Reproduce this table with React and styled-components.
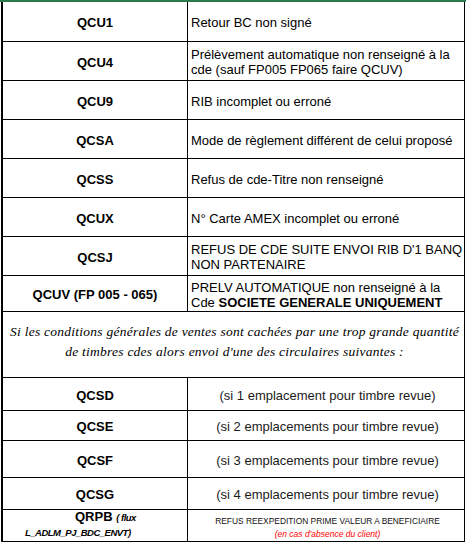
import styled, { createGlobalStyle } from "styled-components";

const GlobalStyle = createGlobalStyle`
  body {
    margin: 0;
    background: #ffffff;
    font-family: "Liberation Sans", Arial, sans-serif;
    color: #000000;
  }
`;

const rows = [
  { code: "QCU1", h: 40, lines: ["Retour BC non signé"] },
  {
    code: "QCU4",
    h: 39,
    lines: [
      "Prélèvement automatique non renseigné à la",
      "cde (sauf FP005 FP065 faire QCUV)",
    ],
  },
  { code: "QCU9", h: 39, lines: ["RIB incomplet ou erroné"] },
  { code: "QCSA", h: 39, lines: ["Mode de règlement différent de celui proposé"] },
  { code: "QCSS", h: 39, lines: ["Refus de cde-Titre non renseigné"] },
  { code: "QCUX", h: 39, lines: ["N° Carte AMEX incomplet ou erroné"] },
  {
    code: "QCSJ",
    h: 39,
    lines: ["REFUS DE CDE SUITE ENVOI RIB D'1 BANQ", "NON PARTENAIRE"],
  },
];

const circulaires = [
  { code: "QCSD", h: 33, text: "(si 1 emplacement pour timbre revue)" },
  { code: "QCSE", h: 30, text: "(si 2 emplacements pour timbre revue)" },
  { code: "QCSF", h: 37, text: "(si 3 emplacements pour timbre revue)" },
  { code: "QCSG", h: 32, text: "(si 4 emplacements pour timbre revue)" },
];

const App = () => {
  return (
    <>
      <GlobalStyle />
      <Sheet>
        <Table>
          {rows.map((r) => (
            <Row key={r.code} $h={r.h}>
              <Code>{r.code}</Code>
              <Desc>
                {r.lines.map((l) => (
                  <Line key={l}>{l}</Line>
                ))}
              </Desc>
            </Row>
          ))}

          <Row $h={36}>
            <Code>QCUV (FP 005 - 065)</Code>
            <Desc>
              <Line>PRELV AUTOMATIQUE non renseigné à la</Line>
              <Line>
                Cde <strong>SOCIETE GENERALE UNIQUEMENT</strong>
              </Line>
            </Desc>
          </Row>

          <NoteRow $h={66}>
            Si les conditions générales de ventes sont cachées par une trop grande quantité
            <br />
            de timbres cdes alors envoi d'une des circulaires suivantes :
          </NoteRow>

          {circulaires.map((c) => (
            <Row key={c.code} $h={c.h}>
              <Code>{c.code}</Code>
              <Desc $center>{c.text}</Desc>
            </Row>
          ))}

          <Row $h={32}>
            <FluxCode>
              <FluxLine $indent={72}>
                <strong>QRPB</strong> <Flux>( flux</Flux>
              </FluxLine>
              <FluxLine $indent={22}>
                <Flux>L_ADLM_PJ_BDC_ENVT)</Flux>
              </FluxLine>
            </FluxCode>
            <Desc $center>
              <SmallCaps>REFUS REEXPEDITION PRIME VALEUR A BENEFICIAIRE</SmallCaps>
              <RedNote>(en cas d'absence du client)</RedNote>
            </Desc>
          </Row>
        </Table>
      </Sheet>
    </>
  );
};

const Sheet = styled.div`
  width: 466px;
  height: 544px;
  box-sizing: border-box;
  border-top: 2px solid #2a7a4b;
  padding-left: 1px;
`;

const Table = styled.div`
  width: 464px;
  box-sizing: border-box;
  border-left: 2px solid #000;
  border-right: 1px solid #000;
  display: flex;
  flex-direction: column;
`;

const Row = styled.div`
  display: grid;
  grid-template-columns: 185px 1fr;
  height: ${({ $h }) => $h}px;
  box-sizing: border-box;
  border-bottom: 1px solid #000;
`;

const Code = styled.div`
  border-right: 1px solid #000;
  display: flex;
  align-items: center;
  justify-content: center;
  padding-top: 2px;
  font-weight: bold;
  font-size: 13px;
  white-space: nowrap;
`;

const Desc = styled.div`
  display: flex;
  flex-direction: column;
  justify-content: center;
  align-items: ${({ $center }) => ($center ? "center" : "flex-start")};
  padding-left: 3px;
  padding-top: 2px;
  font-size: 13px;
  line-height: 15px;
  color: ${({ $center }) => ($center ? "#1a1a1a" : "#000")};
  white-space: nowrap;
`;

const Line = styled.span`
  display: block;
`;

const NoteRow = styled.div`
  height: ${({ $h }) => $h}px;
  box-sizing: border-box;
  border-bottom: 1px solid #000;
  display: flex;
  flex-direction: column;
  justify-content: center;
  align-items: center;
  text-align: center;
  padding-bottom: 6px;
  padding-left: 2px;
  font-family: "Liberation Serif", "Times New Roman", serif;
  font-style: italic;
  font-size: 13.5px;
  line-height: 20px;
  letter-spacing: 0.25px;
  white-space: nowrap;
`;

const FluxCode = styled.div`
  border-right: 1px solid #000;
  display: flex;
  flex-direction: column;
  justify-content: center;
  white-space: nowrap;
  padding-bottom: 2px;
`;

const FluxLine = styled.div`
  padding-left: ${({ $indent }) => $indent}px;
  font-size: 13px;
  line-height: 14px;
`;

const Flux = styled.span`
  font-weight: bold;
  font-style: italic;
  font-size: 9.5px;
  letter-spacing: -0.5px;
`;

const SmallCaps = styled.span`
  font-size: 8.4px;
  line-height: 14px;
  color: #111;
`;

const RedNote = styled.span`
  font-style: italic;
  font-size: 8.5px;
  line-height: 12px;
  color: #ff0000;
`;

export default App;
